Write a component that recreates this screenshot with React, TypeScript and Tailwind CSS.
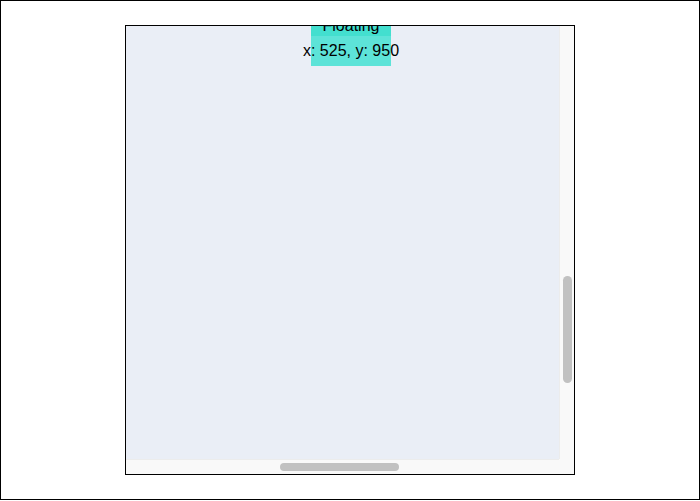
export default function App() {
  return (
    <div
      className="w-[700px] h-[500px] border border-black bg-white flex items-center justify-center"
      style={{ fontFamily: '"Liberation Sans", Arial, sans-serif' }}
    >
      <div className="w-[450px] h-[450px] border border-black bg-white grid grid-cols-[433px_15px] grid-rows-[433px_15px]">
        <div className="relative overflow-hidden bg-[#eaeef6]">
          <div className="absolute left-[185px] top-[-20px] w-[80px] h-[60px] bg-[#5de3d8] flex flex-col items-center justify-end pb-[3px] text-black text-base">
            <div className="absolute inset-x-0 top-0 h-[30px] bg-[#43dfcf]" />
            <div className="relative whitespace-nowrap leading-[25px]">Floating</div>
            <div className="relative whitespace-nowrap leading-[25px]">x: 525, y: 950</div>
          </div>
        </div>
        <div className="relative bg-[#f9f9f9] border-l border-[#ececec]">
          <div className="absolute left-[3px] top-[250px] w-[9px] h-[107px] rounded-full bg-[#c1c1c1]" />
        </div>
        <div className="relative bg-[#f9f9f9] border-t border-[#ececec]">
          <div className="absolute top-[3px] left-[154px] h-[8px] w-[119px] rounded-full bg-[#c1c1c1]" />
        </div>
        <div className="bg-[#f9f9f9]" />
      </div>
    </div>
  );
}
